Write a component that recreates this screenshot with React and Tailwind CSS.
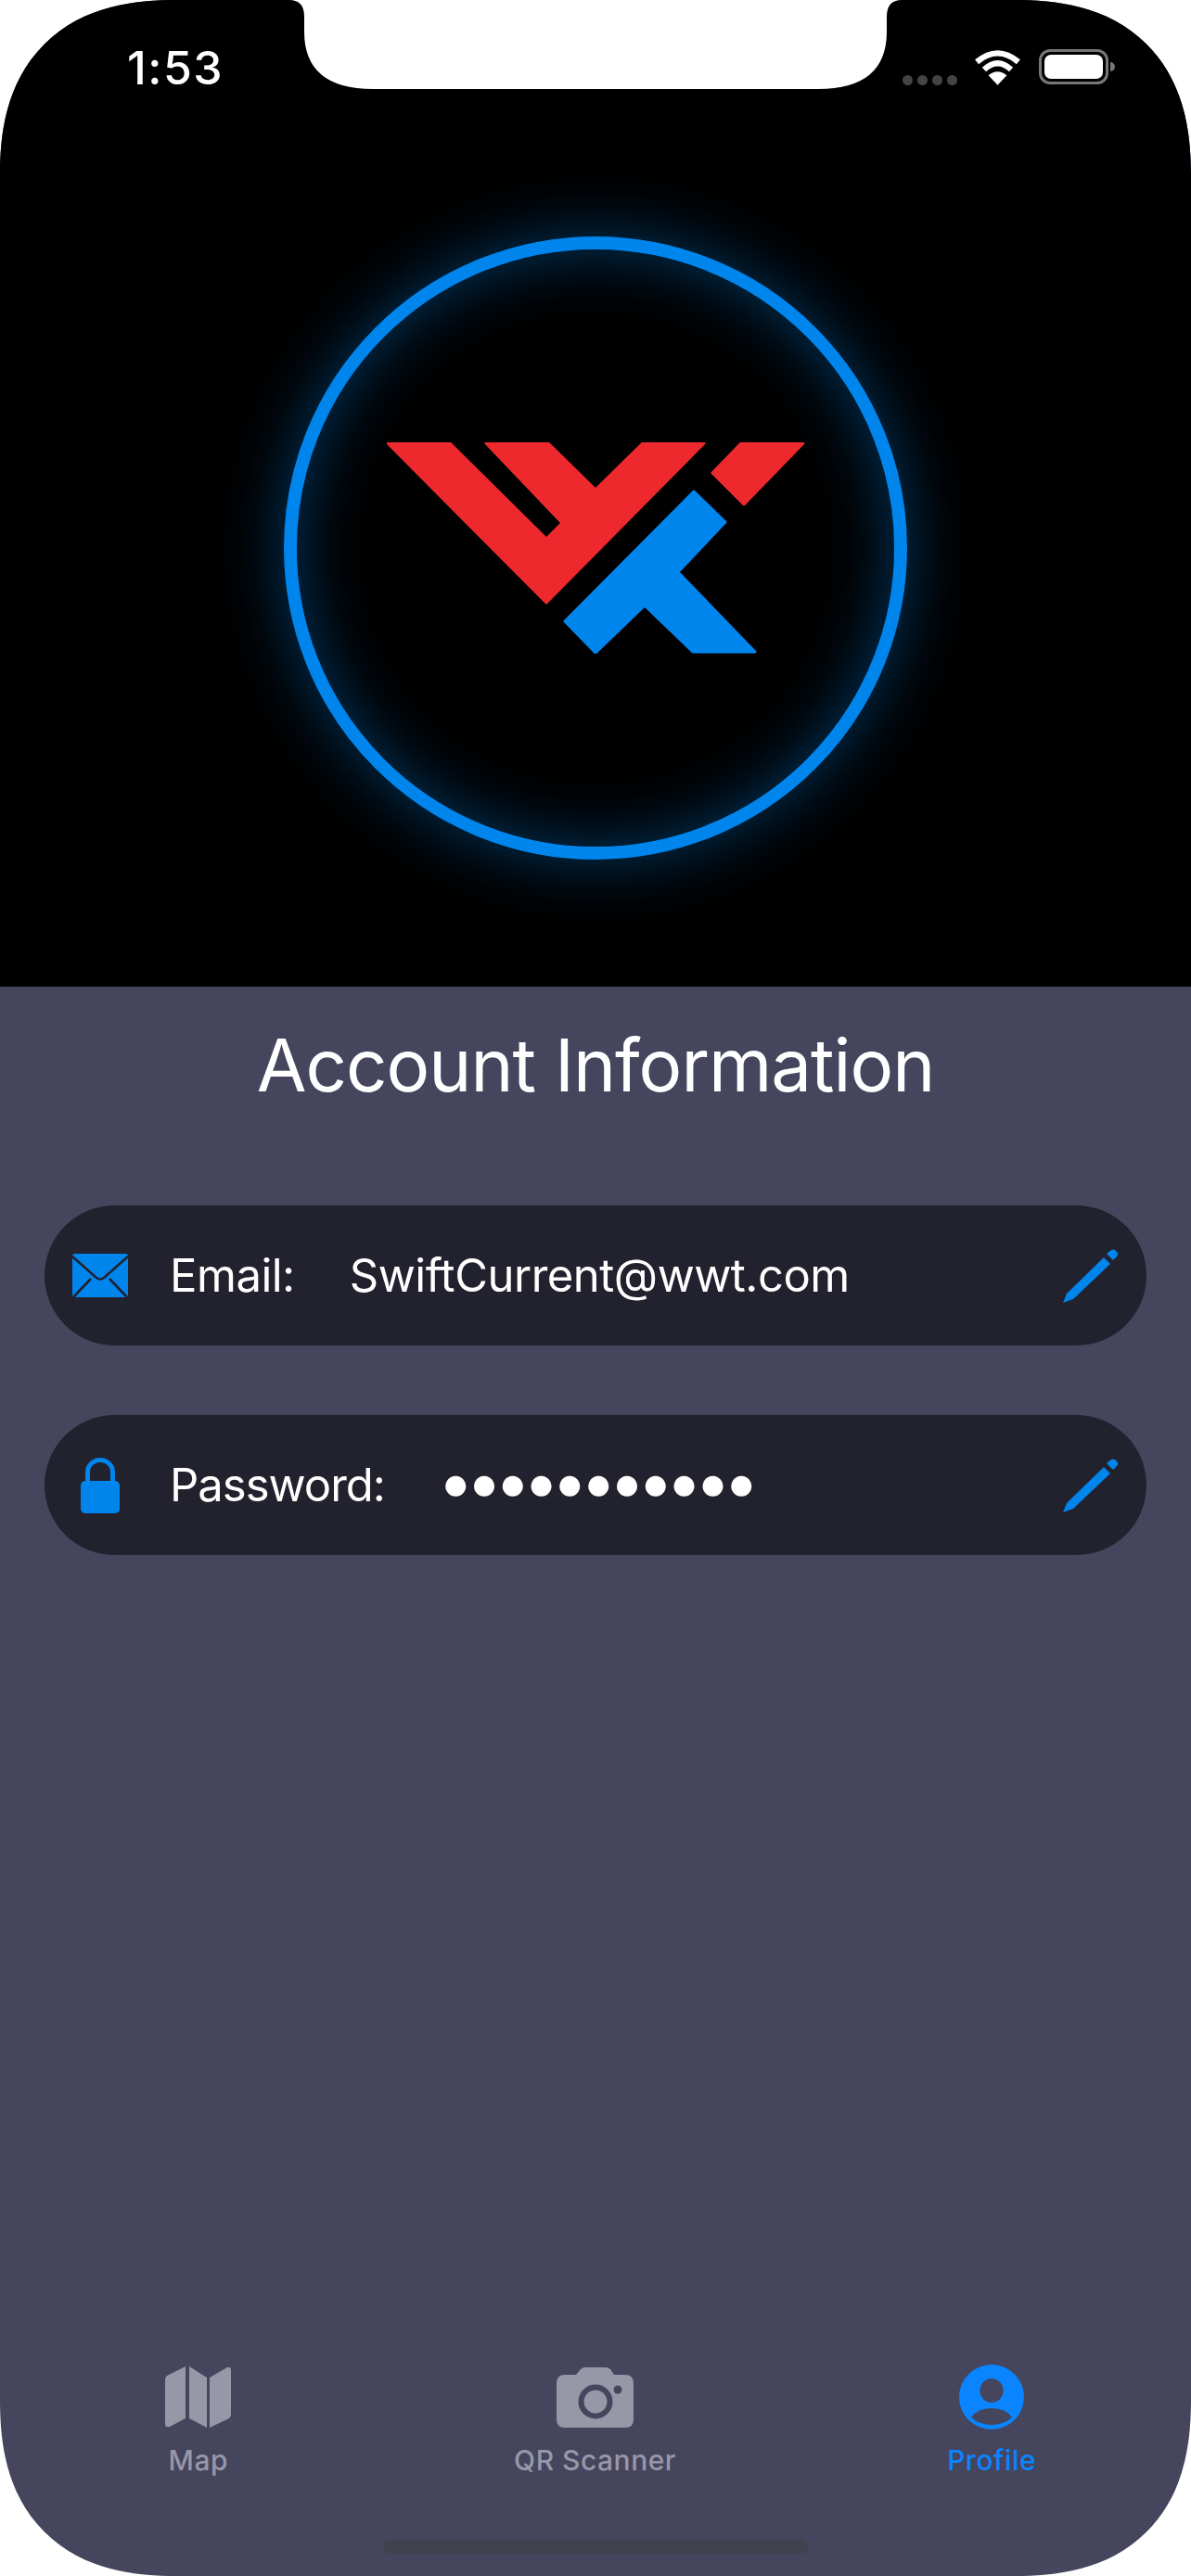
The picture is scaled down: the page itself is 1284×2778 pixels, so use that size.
import React from 'react'

const Logo = () => (
  <svg width="450" height="228" viewBox="417 477 450 228" className="block">
    <g strokeLinejoin="round" strokeWidth="3">
      <path d="M418 478H485L589 581L606 564L524 478H591L642 528L693 478H759L589 650Z" fill="#ee292d" stroke="#ee292d" />
      <path d="M799 478H866L802 544L768 510Z" fill="#ee292d" stroke="#ee292d" />
      <path d="M748 530L782 563L731 617L814 703H747L695 653L642 704L609 670Z" fill="#0085ed" stroke="#0085ed" />
    </g>
  </svg>
)

const MailIcon = () => (
  <svg width="60" height="47" viewBox="0 0 60 47" className="block shrink-0">
    <rect width="60" height="47" rx="3" fill="#0085ed" />
    <path d="M0 3L26 26Q30 29 34 26L60 3M1 47L20 27M59 47L40 27" fill="none" stroke="#22222e" strokeWidth="2.6" />
  </svg>
)

const LockIcon = () => (
  <svg width="42" height="60" viewBox="0 0 42 60" className="block shrink-0">
    <path d="M7.5 27V15.5A13.5 13 0 0 1 34.5 15.5V27" fill="none" stroke="#0085ed" strokeWidth="5" />
    <rect y="25" width="42" height="35" rx="5" fill="#0085ed" />
  </svg>
)

const PencilIcon = () => (
  <svg width="60" height="58" viewBox="0 0 60 58" className="block shrink-0">
    <path d="M0 58L4 48L44 9L51 16L11 54Z" fill="#0085ed" />
    <path d="M47 5L52 1Q54 0 56 1L59 4Q60 6 58 8L54 12Z" fill="#0085ed" />
  </svg>
)

const MapIcon = () => (
  <svg width="71" height="66" viewBox="0 0 71 66" className="block" fill="#9897a8">
    <path d="M22 0V56L5 65Q0 66 0 62V14Q0 12 2 10Z" />
    <path d="M26 0L45 12V66L26 56Z" />
    <path d="M48 12L67 1Q71 0 71 4V52Q71 54 69 56L48 66Z" />
  </svg>
)

const CameraIcon = () => (
  <svg width="83" height="65" viewBox="0 0 83 65" className="block">
    <path d="M9 8H21L26 2Q28 0 31 0H53Q56 0 58 2L62 8H74Q83 8 83 17V56Q83 65 74 65H9Q0 65 0 56V17Q0 8 9 8Z" fill="#9897a8" />
    <circle cx="42" cy="37" r="15.5" fill="none" stroke="#45455d" strokeWidth="6" />
    <circle cx="66" cy="24" r="4.5" fill="#45455d" />
  </svg>
)

const ProfileIcon = () => (
  <svg width="70" height="70" viewBox="0 0 70 70" className="block">
    <circle cx="35" cy="35" r="35" fill="#0a84ff" />
    <ellipse cx="35" cy="28" rx="12.6" ry="13" fill="#45455d" />
    <path d="M13 57Q20 47 35 47Q50 47 57 57Q48 65 35 65Q22 65 13 57Z" fill="#45455d" />
  </svg>
)

const InfoRow = ({ icon, label, children, labelClass }) => (
  <div className="flex h-[151px] items-center rounded-full bg-[#22222e] pr-[30px]">
    <div className="flex w-[135px] shrink-0 justify-center pr-[15px]">{icon}</div>
    <span className={`shrink-0 text-[49px] leading-none text-white ${labelClass}`}>{label}</span>
    <div className="min-w-0 flex-1">{children}</div>
    <PencilIcon />
  </div>
)

const TabItem = ({ icon, label, active }) => (
  <div className="flex flex-1 flex-col items-center">
    <div className="flex h-[70px] items-center">{icon}</div>
    <span className={`mt-[14px] text-[30px] leading-[38px] font-medium tracking-[0.5px] ${active ? 'text-[#0a84ff]' : 'text-[#9897a8]'}`}>{label}</span>
  </div>
)

export default function App() {
  return (
    <div className="h-[2778px] w-[1284px] bg-white font-['Inter',sans-serif]">
      <div className="relative flex h-full w-full flex-col overflow-hidden rounded-[190px] bg-[#45455d] [corner-shape:superellipse(1.26)]">
        {/* notch */}
        <svg width="660" height="96" viewBox="312 0 660 96" className="absolute top-0 left-[312px]">
          <path d="M312 0Q328 0 328 18V34Q328 96 402 96H882Q956 96 956 34V18Q956 0 972 0Z" fill="#fff" />
        </svg>

        <div className="flex h-[1064px] shrink-0 flex-col bg-black">
          <div className="flex h-[100px] items-start justify-between pt-[40px] pr-[82px] pl-[137px]">
            <span className="text-[50px] leading-[66px] font-medium tracking-[1.5px] text-white">1:53</span>
            <div className="flex items-start pt-[13px]">
              <div className="mt-[28px] flex gap-[5px]">
                <span className="h-[11px] w-[11px] rounded-full bg-[#444]" />
                <span className="h-[11px] w-[11px] rounded-full bg-[#444]" />
                <span className="h-[11px] w-[11px] rounded-full bg-[#444]" />
                <span className="h-[11px] w-[11px] rounded-full bg-[#444]" />
              </div>
              <svg width="51" height="38" viewBox="0 0 49 36" className="mt-[1px] ml-[18px] block">
                <path d="M24.5 36L15 26Q24.5 18 34 26Z" fill="#fff" />
                <path d="M3 12Q24.5 -6 46 12M10.5 20Q24.5 7 38.5 20" fill="none" stroke="#fff" strokeWidth="6" />
              </svg>
              <div className="ml-[19px] flex items-center">
                <div className="flex h-[38px] w-[75px] rounded-[12px] border-[3.5px] border-[#777] p-[3px]">
                  <div className="flex-1 rounded-[7px] bg-white" />
                </div>
                <div className="ml-[2px] h-[10px] w-[5px] rounded-r-full bg-[#777]" />
              </div>
            </div>
          </div>
          <div className="mt-[155px] flex h-[672px] w-[672px] items-center justify-center self-center rounded-full border-[14px] border-[#0085ed] shadow-[0_0_70px_rgba(0,133,237,0.42),inset_0_0_70px_rgba(0,133,237,0.42)]">
            <Logo />
          </div>
        </div>

        <h1 className="mt-[38px] text-center text-[78px] leading-[94px] font-normal tracking-[-1px] text-white">Account Information</h1>

        <div className="mt-[104px] flex flex-col gap-[75px] pr-[48px] pl-[48px]">
          <InfoRow icon={<MailIcon />} label="Email:" labelClass="mr-[59px] tracking-[-0.5px]">
            <span className="text-[49px] leading-none tracking-[-0.5px] text-white">SwiftCurrent@wwt.com</span>
          </InfoRow>
          <InfoRow icon={<LockIcon />} label="Password:" labelClass="mr-[61px] tracking-[-1px]">
            <span className="mb-[5px] block font-['Liberation_Sans',sans-serif] text-[51px] leading-none text-white">●●●●●●●●●●●</span>
          </InfoRow>
        </div>

        <div className="mt-auto flex pr-[1px] pb-[106px]">
          <TabItem icon={<MapIcon />} label="Map" />
          <TabItem icon={<CameraIcon />} label="QR Scanner" />
          <TabItem icon={<ProfileIcon />} label="Profile" active />
        </div>

        {/* home indicator */}
        <div className="absolute bottom-[24px] left-[413px] h-[15px] w-[458px] rounded-full bg-[#42414e]" />
      </div>
    </div>
  )
}
